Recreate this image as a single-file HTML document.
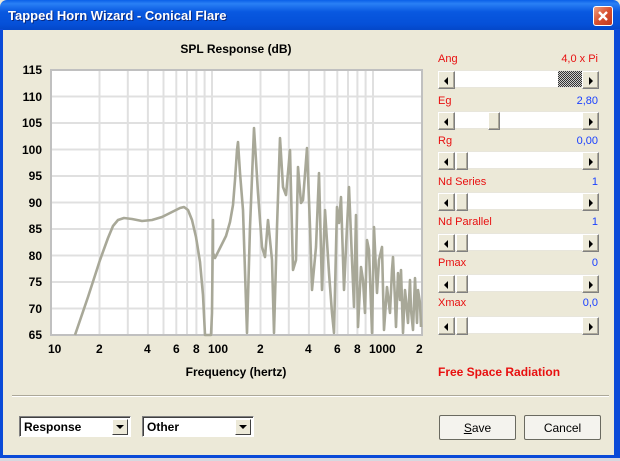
<!DOCTYPE html>
<html><head><meta charset="utf-8"><style>
*{margin:0;padding:0;box-sizing:border-box}
body{width:620px;height:461px;background:#ece9d8;position:relative;overflow:hidden;font-family:"Liberation Sans",sans-serif;font-size:11px}
.abs{position:absolute}
#tb{left:0;top:0;width:620px;height:30px;background:linear-gradient(#0a5fe8 0%,#2a80f5 12%,#0858e0 40%,#0550d8 80%,#0447c8 100%);border-radius:7px 7px 0 0}
#tt{left:8px;top:8px;color:#fff;font-weight:bold;font-size:13px;text-shadow:1px 1px #0a2a80}
#cl{left:593px;top:6px;width:20px;height:20px;background:linear-gradient(135deg,#f0a080,#d85030 50%,#c03820);border:1px solid #fff;border-radius:3px}
.bl{background:#0a4ad8}
.lab{color:#e81010;font-size:11px}
.val{color:#1a40ff;font-size:11px;text-align:right;width:160px}
.sb{width:161px;height:18px;background:#fff;border:1px solid #e8e6dc}
.btn{position:absolute;top:0;width:17px;height:18px;background:#ece9d8;border:1px solid;border-color:#fff #808080 #808080 #fff;box-shadow:inset -1px -1px #aca899}
.ar{position:absolute;top:5px;width:0;height:0;border-top:4px solid transparent;border-bottom:4px solid transparent}
.yl{right:578px;font-weight:bold;font-size:12px;text-align:right}
.xl{font-weight:bold;font-size:12px;top:342px}
.dd{height:21px;border:1px solid;border-color:#808080 #fff #fff #808080;background:#fff;box-shadow:inset 1px 1px #404040;font-weight:bold;font-size:12px;padding:3px 0 0 4px}
.dda{position:absolute;right:2px;top:2px;width:16px;height:16px;background:#ece9d8;border:1px solid;border-color:#fff #404040 #404040 #fff}
.pb{height:25px;border:1px solid #6a6a60;background:#f4f3ee;border-radius:2px;text-align:center;font-size:12px;padding-top:5px}
</style></head><body>
<div id="tb" class="abs"></div>
<div id="tt" class="abs">Tapped Horn Wizard - Conical Flare</div>
<div id="cl" class="abs"><svg width="18" height="18" style="position:absolute;left:0;top:0"><path d="M5 5L13 13M13 5L5 13" stroke="#fff" stroke-width="2.4"/></svg></div>
<div class="abs bl" style="left:0;top:29px;width:3px;height:432px"></div>
<div class="abs bl" style="left:614px;top:29px;width:6px;height:432px"></div>
<div class="abs bl" style="left:0;top:455px;width:620px;height:3px"></div>
<div class="abs" style="left:0;top:458px;width:620px;height:3px;background:#d8d8e0"></div>

<div class="abs" style="left:0;top:42px;width:472px;text-align:center;font-weight:bold;font-size:12px">SPL Response (dB)</div>
<div class="abs yl" style="top:63px">115</div>
<div class="abs yl" style="top:90px">110</div>
<div class="abs yl" style="top:116px">105</div>
<div class="abs yl" style="top:143px">100</div>
<div class="abs yl" style="top:169px">95</div>
<div class="abs yl" style="top:196px">90</div>
<div class="abs yl" style="top:222px">85</div>
<div class="abs yl" style="top:249px">80</div>
<div class="abs yl" style="top:275px">75</div>
<div class="abs yl" style="top:302px">70</div>
<div class="abs yl" style="top:328px">65</div>
<div class="abs xl" style="left:48px">10</div>
<div class="abs xl" style="left:96px">2</div>
<div class="abs xl" style="left:144px">4</div>
<div class="abs xl" style="left:173px">6</div>
<div class="abs xl" style="left:193px">8</div>
<div class="abs xl" style="left:208px">100</div>
<div class="abs xl" style="left:257px">2</div>
<div class="abs xl" style="left:305px">4</div>
<div class="abs xl" style="left:334px">6</div>
<div class="abs xl" style="left:354px">8</div>
<div class="abs xl" style="left:369px">1000</div>
<div class="abs xl" style="left:416px">2</div>
<div class="abs" style="left:0;top:365px;width:472px;text-align:center;font-weight:bold;font-size:12px">Frequency (hertz)</div>

<svg class="abs" style="left:0;top:0" width="620" height="461">
<rect x="51" y="70" width="371" height="265" fill="#fff"/>
<g stroke="#e0e0e0" stroke-width="2">
<path d="M51 96.5H422M51 123H422M51 149.5H422M51 176H422M51 202.5H422M51 229H422M51 255.5H422M51 282H422M51 308.5H422"/>
<path d="M99.5 70V335M127.8 70V335M147.9 70V335M163.5 70V335M176.3 70V335M187 70V335M196.4 70V335M204.6 70V335M212 70V335M260.5 70V335M288.8 70V335M308.9 70V335M324.5 70V335M337.3 70V335M348 70V335M357.4 70V335M365.6 70V335M373 70V335"/>
</g>
<rect x="51" y="70" width="371" height="265" fill="none" stroke="#c0c0c0" stroke-width="2"/>
<polyline fill="none" stroke="#a8a898" stroke-width="2.6" stroke-linejoin="round" points="75,335 88,297 100,260 108,238 113,226 118,220 124,218 132,219 142,221 152,220 162,217 172,212 180,208 184,207 188,210 192,220 196,237 200,262 203,295 205,335 211,335 212,313 213,220 213,253 215,258 220,248 226,236 230,222 233,205 235,180 237,150 238,142 240,173 243,210 247,333 250,227 254,128 258,193 262,247 265,257 268,220 272,260 274,333 277,227 280,138 283,187 286,195 290,150 293,270 296,260 298,167 301,203 303,200 307,148 310,227 312,290 316,247 319,173 322,290 325,210 329,273 332,313 334,333 337,207 339,223 341,197 344,290 347,227 349,187 352,260 354,307 356,215 358,327 361,267 363,280 365,313 367,240 369,250 372,333 374,227 377,293 379,260 382,247 384,330 387,287 390,313 392,270 393,257 395,300 396,327 398,273 400,300 401,270 403,333 405,290 406,300 408,323 410,280 411,310 413,330 415,278 416,300 417,323 418,290 420,303 421,327"/>
</svg>

<div class="abs lab" style="left:438px;top:53px">Ang</div><div class="abs lab" style="left:438px;top:53px;width:160px;text-align:right">4,0 x Pi</div>
<div class="abs lab" style="left:438px;top:95px">Eg</div><div class="abs val" style="left:438px;top:95px">2,80</div>
<div class="abs lab" style="left:438px;top:135px">Rg</div><div class="abs val" style="left:438px;top:135px">0,00</div>
<div class="abs lab" style="left:438px;top:176px">Nd Series</div><div class="abs val" style="left:438px;top:176px">1</div>
<div class="abs lab" style="left:438px;top:216px">Nd Parallel</div><div class="abs val" style="left:438px;top:216px">1</div>
<div class="abs lab" style="left:438px;top:257px">Pmax</div><div class="abs val" style="left:438px;top:257px">0</div>
<div class="abs lab" style="left:438px;top:297px">Xmax</div><div class="abs val" style="left:438px;top:297px">0,0</div>

<div class="abs sb" style="left:438px;top:70px"><div class="btn" style="left:-1px"><div class="ar" style="left:5px;border-right:4px solid #000"></div></div><div class="abs" style="left:119px;top:0;width:24px;height:16px;background:repeating-conic-gradient(#333 0 25%,#ccc 0 50%) 0 0/2px 2px"></div><div class="btn" style="right:-1px"><div class="ar" style="left:6px;border-left:4px solid #000"></div></div></div>
<div class="abs sb" style="left:438px;top:111px"><div class="btn" style="left:-1px"><div class="ar" style="left:5px;border-right:4px solid #000"></div></div><div class="btn" style="left:49px;width:12px"></div><div class="btn" style="right:-1px"><div class="ar" style="left:6px;border-left:4px solid #000"></div></div></div>
<div class="abs sb" style="left:438px;top:151px"><div class="btn" style="left:-1px"><div class="ar" style="left:5px;border-right:4px solid #000"></div></div><div class="btn" style="left:17px;width:12px"></div><div class="btn" style="right:-1px"><div class="ar" style="left:6px;border-left:4px solid #000"></div></div></div>
<div class="abs sb" style="left:438px;top:192px"><div class="btn" style="left:-1px"><div class="ar" style="left:5px;border-right:4px solid #000"></div></div><div class="btn" style="left:17px;width:12px"></div><div class="btn" style="right:-1px"><div class="ar" style="left:6px;border-left:4px solid #000"></div></div></div>
<div class="abs sb" style="left:438px;top:233px"><div class="btn" style="left:-1px"><div class="ar" style="left:5px;border-right:4px solid #000"></div></div><div class="btn" style="left:17px;width:12px"></div><div class="btn" style="right:-1px"><div class="ar" style="left:6px;border-left:4px solid #000"></div></div></div>
<div class="abs sb" style="left:438px;top:274px"><div class="btn" style="left:-1px"><div class="ar" style="left:5px;border-right:4px solid #000"></div></div><div class="btn" style="left:17px;width:12px"></div><div class="btn" style="right:-1px"><div class="ar" style="left:6px;border-left:4px solid #000"></div></div></div>
<div class="abs sb" style="left:438px;top:316px"><div class="btn" style="left:-1px"><div class="ar" style="left:5px;border-right:4px solid #000"></div></div><div class="btn" style="left:17px;width:12px"></div><div class="btn" style="right:-1px"><div class="ar" style="left:6px;border-left:4px solid #000"></div></div></div>

<div class="abs" style="left:438px;top:365px;color:#e81010;font-weight:bold;font-size:12px">Free Space Radiation</div>

<div class="abs" style="left:12px;top:395px;width:597px;height:2px;border-top:1px solid #aca899;border-bottom:1px solid #fff"></div>

<div class="abs dd" style="left:19px;top:416px;width:112px">Response<div class="dda"><div class="ar" style="left:3px;top:5px;border:4px solid transparent;border-top:4px solid #000;border-bottom:0"></div></div></div>
<div class="abs dd" style="left:142px;top:416px;width:112px">Other<div class="dda"><div class="ar" style="left:3px;top:5px;border:4px solid transparent;border-top:4px solid #000;border-bottom:0"></div></div></div>
<div class="abs pb" style="left:439px;top:415px;width:77px"><u>S</u>ave</div>
<div class="abs pb" style="left:524px;top:415px;width:77px">Cancel</div>
</body></html>
